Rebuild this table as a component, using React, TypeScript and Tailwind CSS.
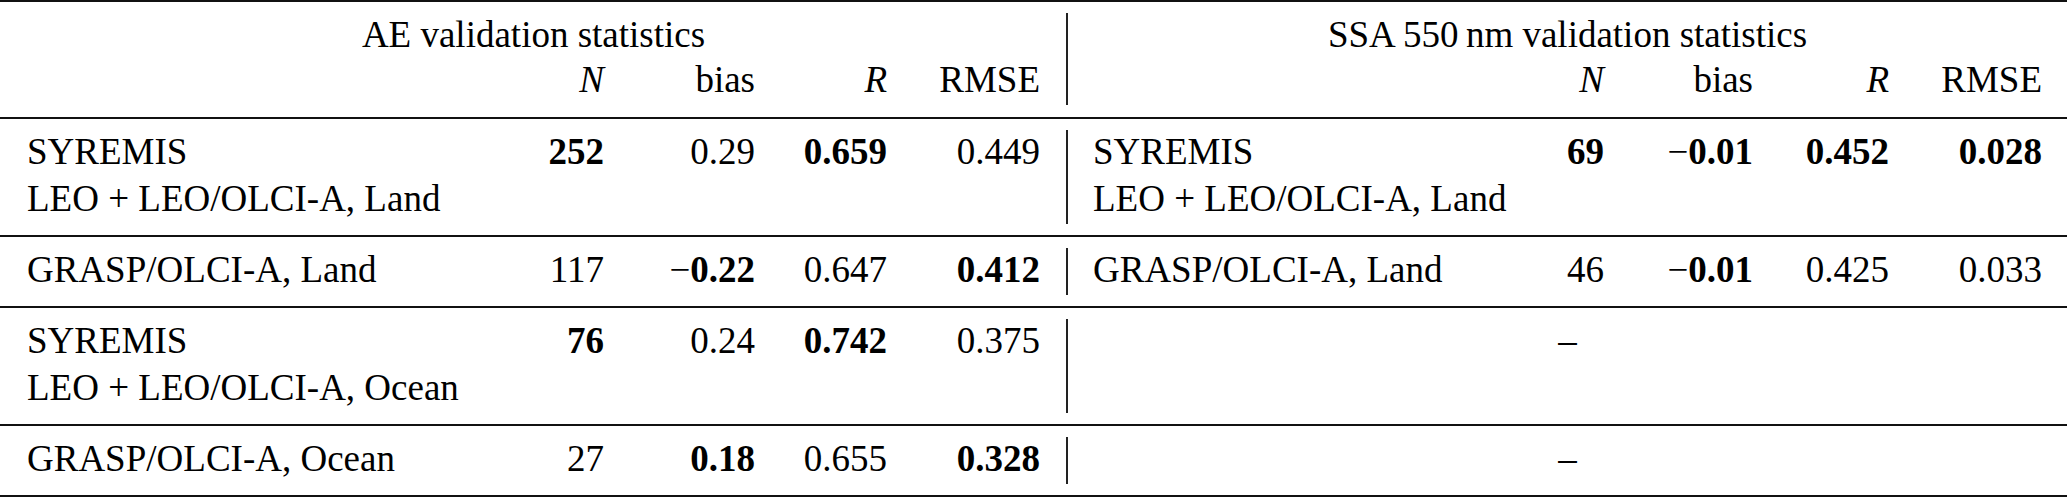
import React from "react";

const COLS =
  "grid grid-cols-[513px_64px_151px_132px_153px_53px_447px_64px_149px_136px_153px]";

function Rule({ thick = false }: { thick?: boolean }) {
  return <div className={thick ? "h-[3px] bg-[#111]" : "h-[2px] bg-[#111]"} />;
}

function VLine() {
  return (
    <div className="flex justify-center pt-[11px] pb-[11px]">
      <div className="w-[2px] bg-[#222]" />
    </div>
  );
}

function Neg({ v }: { v: string }) {
  return (
    <span>
      <span className="font-normal">−</span>
      <b className="font-bold">{v}</b>
    </span>
  );
}

type Cell = React.ReactNode;

function Label({ lines }: { lines: string[] }) {
  return (
    <div className="pt-[9px] pb-[13px] text-left">
      {lines.map((l, i) => (
        <div key={i} className="whitespace-nowrap">
          {l}
        </div>
      ))}
    </div>
  );
}

function Num({ children }: { children: Cell }) {
  return <div className="pt-[9px] pb-[13px] text-right whitespace-nowrap">{children}</div>;
}

function B({ children }: { children: Cell }) {
  return <b className="font-bold">{children}</b>;
}

function H({ children, italic = false }: { children: Cell; italic?: boolean }) {
  return <div className={italic ? "pb-[15px] text-right italic" : "pb-[15px] text-right"}>{children}</div>;
}

function BodyRow({
  left,
  leftVals,
  right,
  rightVals,
}: {
  left: string[];
  leftVals: Cell[];
  right?: string[];
  rightVals?: Cell[];
}) {
  return (
    <div className={`${COLS} leading-[47px]`}>
      <Label lines={left} />
      {leftVals.map((v, i) => (
        <Num key={i}>{v}</Num>
      ))}
      <VLine />
      {right && rightVals ? (
        <>
          <Label lines={right} />
          {rightVals.map((v, i) => (
            <Num key={i}>{v}</Num>
          ))}
        </>
      ) : (
        <div className="col-span-5 pt-[9px] pb-[13px] text-center">–</div>
      )}
    </div>
  );
}

export default function App() {
  return (
    <div className="w-[2067px] h-[497px] overflow-hidden bg-white text-[37px] text-black [font-family:Liberation_Serif]">
      <Rule />
      <div className="pl-[27px] pr-[25px]">
        <div className={`${COLS} leading-[45px]`}>
          <div className="col-span-5 pt-[10px] text-center whitespace-nowrap">AE validation statistics</div>
          <div className="row-span-2 flex justify-center pt-[11px] pb-[12px]">
            <div className="w-[2px] bg-[#222]" />
          </div>
          <div className="col-span-5 pt-[10px] text-center whitespace-nowrap">
            SSA 550{"\u2009"}nm validation statistics
          </div>
          <div className="pb-[15px]" />
          <H italic>N</H>
          <H>bias</H>
          <H italic>R</H>
          <H>RMSE</H>
          <div className="pb-[15px]" />
          <H italic>N</H>
          <H>bias</H>
          <H italic>R</H>
          <H>RMSE</H>
        </div>
      </div>
      <Rule />
      <div className="pl-[27px] pr-[25px]">
        <BodyRow
          left={["SYREMIS", "LEO + LEO/OLCI-A, Land"]}
          leftVals={[<B>252</B>, "0.29", <B>0.659</B>, "0.449"]}
          right={["SYREMIS", "LEO + LEO/OLCI-A, Land"]}
          rightVals={[<B>69</B>, <Neg v="0.01" />, <B>0.452</B>, <B>0.028</B>]}
        />
      </div>
      <Rule />
      <div className="pl-[27px] pr-[25px]">
        <BodyRow
          left={["GRASP/OLCI-A, Land"]}
          leftVals={["117", <Neg v="0.22" />, "0.647", <B>0.412</B>]}
          right={["GRASP/OLCI-A, Land"]}
          rightVals={["46", <Neg v="0.01" />, "0.425", "0.033"]}
        />
      </div>
      <Rule />
      <div className="pl-[27px] pr-[25px]">
        <BodyRow
          left={["SYREMIS", "LEO + LEO/OLCI-A, Ocean"]}
          leftVals={[<B>76</B>, "0.24", <B>0.742</B>, "0.375"]}
        />
      </div>
      <Rule />
      <div className="pl-[27px] pr-[25px]">
        <BodyRow
          left={["GRASP/OLCI-A, Ocean"]}
          leftVals={["27", <B>0.18</B>, "0.655", <B>0.328</B>]}
        />
      </div>
      <Rule thick />
    </div>
  );
}
